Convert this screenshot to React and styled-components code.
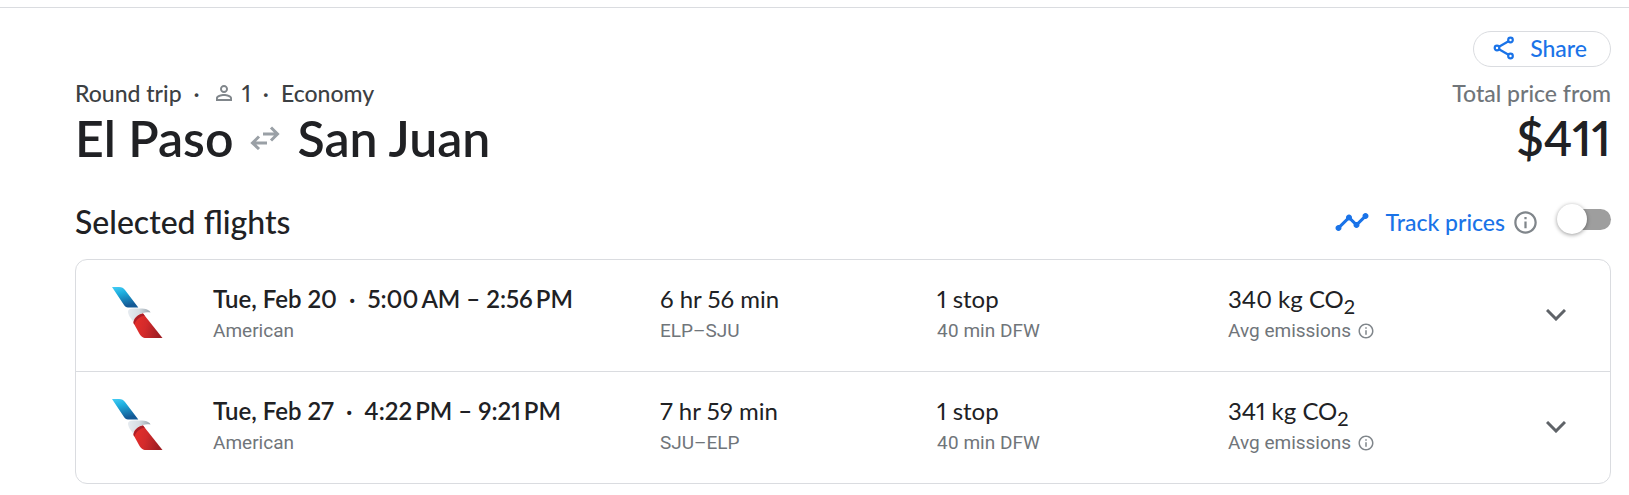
import React, { useId, useState } from 'react';
import styled, { createGlobalStyle } from 'styled-components';
import { MdPersonOutline, MdOutlineInfo, MdTimeline } from 'react-icons/md';

const display = '"Lato", "Open Sans", sans-serif';

const flights = [
  {
    date: 'Tue, Feb 20',
    times: '5:00\u2009AM – 2:56\u2009PM',
    airline: 'American',
    duration: '6 hr 56 min',
    route: 'ELP–SJU',
    stops: '1 stop',
    layover: '40 min DFW',
    emissions: '340 kg CO',
  },
  {
    date: 'Tue, Feb 27',
    times: '4:22\u2009PM – 9:21\u2009PM',
    airline: 'American',
    duration: '7 hr 59 min',
    route: 'SJU–ELP',
    stops: '1 stop',
    layover: '40 min DFW',
    emissions: '341 kg CO',
  },
];

function ShareIcon() {
  return (
    <svg width="24" height="24" viewBox="0 0 24 24" fill="none" stroke="currentColor" strokeWidth="2.2" aria-hidden="true">
      <circle cx="5" cy="12" r="2.3" />
      <circle cx="18.5" cy="4" r="2.3" />
      <circle cx="18.5" cy="20" r="2.3" />
      <path d="M7 10.8l9.5-5.6M7 13.2l9.5 5.6" />
    </svg>
  );
}

function RoundTripIcon() {
  return (
    <svg width="30" height="24" viewBox="0 0 30 24" fill="none" stroke="#9aa0a6" strokeWidth="3" aria-label="to and from">
      <path d="M13 8h14M21 1.5L27.5 8 21 14.5" />
      <path d="M17 17H3M9 10.5L2.5 17 9 23" />
    </svg>
  );
}

function ChevronIcon() {
  return (
    <svg width="20" height="12" viewBox="0 0 20 12" fill="none" stroke="#5f6368" strokeWidth="3" aria-hidden="true">
      <path d="M1 1l9 9 9-9" />
    </svg>
  );
}

function AirlineLogo() {
  const id = useId();
  return (
    <Logo viewBox="0 0 51 51" role="img" aria-label="American">
      <defs>
        <linearGradient id={id + 'blue'} x1="0" y1="0" x2="0.3" y2="1">
          <stop offset="0" stopColor="#45cdf5" />
          <stop offset="0.35" stopColor="#1fb0e0" />
          <stop offset="1" stopColor="#145a96" />
        </linearGradient>
        <linearGradient id={id + 'grey'} x1="0" y1="0" x2="1" y2="0">
          <stop offset="0" stopColor="#e6ebf0" />
          <stop offset="0.5" stopColor="#d5dce2" />
          <stop offset="1" stopColor="#98a4ac" />
        </linearGradient>
        <linearGradient id={id + 'red'} x1="0" y1="0" x2="1" y2="0.2">
          <stop offset="0" stopColor="#e8302a" />
          <stop offset="0.5" stopColor="#d32a2b" />
          <stop offset="1" stopColor="#a01f24" />
        </linearGradient>
      </defs>
      <path d="M0 0h7c3 0 4.500 1 6 3l13.300 17.500H16c-2 0-3-1-4-2.500Z" fill={`url(#${id}blue)`} />
      <path d="M16 24.500c0-2 2-3 5-3h7c6 0 9.500 1.500 10.500 4-2.500-.6-5-.5-7.500.5-5 1.500-8.500 5-9.500 9L17.500 29.500c-1-2-1.500-3.500-1.500-5Z" fill={`url(#${id}grey)`} />
      <path d="M31 26.500L50.500 51H34c-3.500 0-5-1.500-7-5l-5.500-10c0-4.500 4-8.500 9.500-9.500Z" fill={`url(#${id}red)`} />
      <path d="M31 26.500l1.800 2.300c-4.500.5-9 3.700-10.300 9l-1-1.800c.3-4.500 4.200-8.600 9.500-9.500Z" fill="#ab1f27" />
    </Logo>
  );
}

function FlightRow({ flight }) {
  return (
    <Row>
      <AirlineLogo />
      <div>
        <Main $strong>
          {flight.date}
          <Dot>·</Dot>
          {flight.times}
        </Main>
        <Sub>{flight.airline}</Sub>
      </div>
      <div>
        <Main>{flight.duration}</Main>
        <Sub>{flight.route}</Sub>
      </div>
      <div>
        <Main>{flight.stops}</Main>
        <Sub>{flight.layover}</Sub>
      </div>
      <div>
        <Main>
          {flight.emissions}
          <sub>2</sub>
        </Main>
        <Sub>
          Avg emissions
          <IconButton aria-label="About emissions">
            <MdOutlineInfo size={18} />
          </IconButton>
        </Sub>
      </div>
      <IconButton aria-label="Flight details">
        <ChevronIcon />
      </IconButton>
    </Row>
  );
}

export default function App() {
  const [tracking, setTracking] = useState(false);

  return (
    <>
      <GlobalStyle />
      <Page>
        <Actions>
          <ShareButton>
            <ShareIcon />
            Share
          </ShareButton>
        </Actions>
        <Summary>
          <div>
            <TripInfo>
              Round trip
              <Dot>·</Dot>
              <MdPersonOutline size={24} color="#80868b" />
              <Passengers>1</Passengers>
              <Dot>·</Dot>
              Economy
            </TripInfo>
            <Title>
              El Paso
              <RoundTripIcon />
              San Juan
            </Title>
          </div>
          <Price>
            <PriceLabel>Total price from</PriceLabel>
            <Amount>$411</Amount>
          </Price>
        </Summary>
        <SectionHeader>
          <SectionTitle>Selected flights</SectionTitle>
          <Track>
            <MdTimeline size={36} />
            <TrackLabel htmlFor="track-prices">Track prices</TrackLabel>
            <IconButton aria-label="About price tracking">
              <MdOutlineInfo size={27} />
            </IconButton>
            <Toggle
              id="track-prices"
              type="checkbox"
              role="switch"
              checked={tracking}
              onChange={(e) => setTracking(e.target.checked)}
            />
          </Track>
        </SectionHeader>
        <Flights>
          {flights.map((flight) => (
            <FlightRow key={flight.date} flight={flight} />
          ))}
        </Flights>
      </Page>
    </>
  );
}

const GlobalStyle = createGlobalStyle`
  * {
    box-sizing: border-box;
  }
  body {
    margin: 0;
    background: #fff;
    color: #202124;
    font-family: ${display};
    font-variant-numeric: proportional-nums;
  }
`;

const Page = styled.main`
  margin-top: 7px;
  padding: 23px 18px 11px 75px;
  border-top: 1px solid #dadce0;
`;

// HEADER
const Actions = styled.div`
  display: flex;
  justify-content: flex-end;
`;

const ShareButton = styled.button`
  display: flex;
  align-items: center;
  gap: 14px;
  height: 36px;
  padding: 0 23px 2px 18px;
  border: 1px solid #dadce0;
  border-radius: 18px;
  background: #fff;
  color: #1a73e8;
  font-family: ${display};
  font-size: 23px;
  font-weight: 500;
  cursor: pointer;
`;

const Summary = styled.header`
  display: flex;
  justify-content: space-between;
  margin-top: 11px;
`;

const TripInfo = styled.div`
  display: flex;
  align-items: center;
  color: #3c4043;
  font-size: 23px;
  font-weight: 500;
  line-height: 30px;
`;

const Dot = styled.span`
  margin: 0 12px;
`;

const Passengers = styled.span`
  margin-left: 6px;
`;

const Title = styled.h1`
  display: flex;
  align-items: center;
  gap: 17px;
  margin: 0;
  font-size: 50px;
  font-weight: 600;
  line-height: 60px;
`;

const Price = styled.div`
  text-align: right;
`;

const PriceLabel = styled.div`
  color: #70757a;
  font-size: 23px;
  font-weight: 500;
  line-height: 30px;
`;

const Amount = styled.div`
  font-size: 48px;
  font-weight: 600;
  line-height: 60px;
`;

// SELECTED FLIGHTS
const SectionHeader = styled.div`
  display: flex;
  align-items: center;
  justify-content: space-between;
  margin: 27px 0 10px;
  height: 54px;
`;

const SectionTitle = styled.h2`
  margin: 0;
  font-size: 32px;
  font-weight: 500;
  line-height: 36px;
`;

const Track = styled.div`
  display: flex;
  align-items: center;
  color: #1a73e8;
`;

const TrackLabel = styled.label`
  margin: 0 7px 0 16px;
  font-size: 23px;
  font-weight: 500;
  cursor: pointer;
`;

const IconButton = styled.button`
  display: inline-flex;
  align-items: center;
  justify-content: center;
  padding: 0;
  border: 0;
  background: none;
  color: #80868b;
  cursor: pointer;
`;

const Toggle = styled.input`
  appearance: none;
  display: flex;
  align-items: center;
  width: 51px;
  height: 21px;
  margin: 0 0 6px 21px;
  border-radius: 11px;
  background: #9e9e9e;
  cursor: pointer;

  &::before {
    content: '';
    flex: none;
    width: 30px;
    height: 30px;
    margin-left: -3px;
    border-radius: 50%;
    background: #fff;
    box-shadow: 0 1px 4px rgba(0, 0, 0, 0.4);
  }

  &:checked {
    justify-content: flex-end;
    background: #8ab4f8;
  }
`;

const Flights = styled.section`
  border: 1px solid #dadce0;
  border-radius: 12px;
`;

const Row = styled.article`
  display: grid;
  grid-template-columns: 101px 447fr 277fr 291fr 274fr 108px;
  padding: 23px 0 24px 36px;

  & + & {
    border-top: 1px solid #dadce0;
  }
`;

const Logo = styled.svg`
  width: 51px;
  height: 51px;
  margin-top: 4px;
`;

const Main = styled.div`
  font-size: 24px;
  font-weight: ${(props) => (props.$strong ? 600 : 400)};
  line-height: 32px;
  white-space: nowrap;

  sub {
    font-size: 20px;
    line-height: 0;
  }
`;

const Sub = styled.div`
  display: flex;
  align-items: center;
  gap: 6px;
  color: #70757a;
  font-family: "Roboto", sans-serif;
  font-size: 19px;
  line-height: 32px;
`;
